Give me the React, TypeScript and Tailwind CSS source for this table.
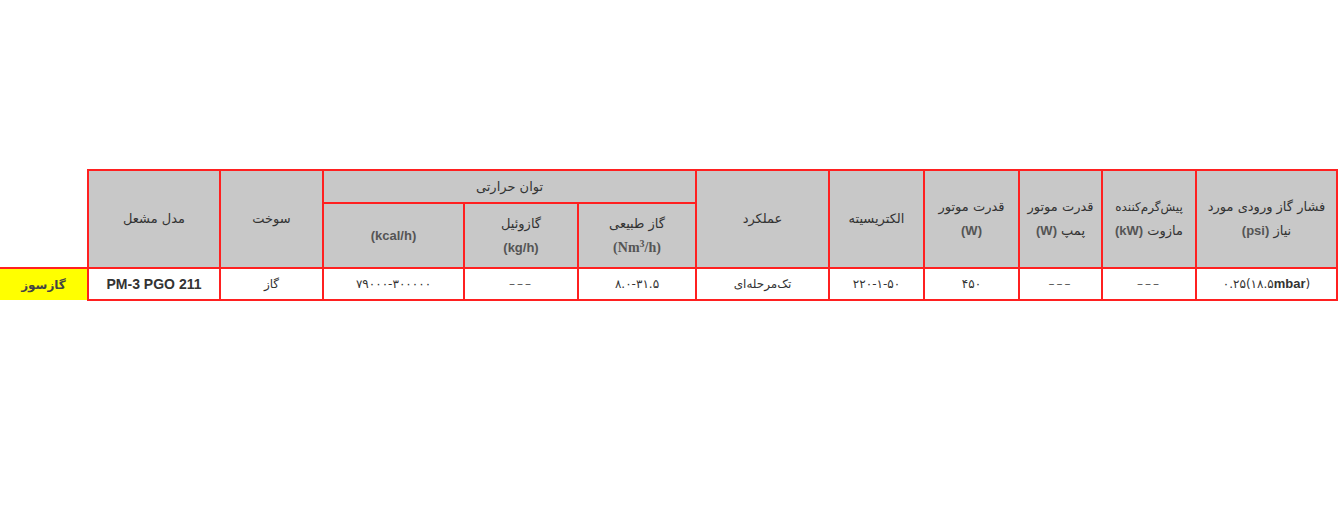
import React from "react";

const th = "border-2 border-[#ff2020] bg-[#c8c8c8] text-[#333] text-[13px] font-normal text-center align-middle leading-[24px] p-0";
const td = "border-2 border-[#ff2020] bg-white text-[#333] text-[12px] text-center align-middle p-0 h-[32px]";
const unit = "font-bold text-[#555] font-['Liberation_Sans',sans-serif]";
const dash = <span className="tracking-[2px] text-[#555]">–––</span>;

export default function App() {
  return (
    <div className="w-[1341px] h-[523px] bg-white font-['DejaVu_Sans',sans-serif] pt-[169px]">
      <table dir="rtl" className="table-fixed border-collapse w-[1337px]">
        <colgroup>
          <col className="w-[141px]" />
          <col className="w-[94px]" />
          <col className="w-[83px]" />
          <col className="w-[95px]" />
          <col className="w-[95px]" />
          <col className="w-[133px]" />
          <col className="w-[118px]" />
          <col className="w-[114px]" />
          <col className="w-[141px]" />
          <col className="w-[103px]" />
          <col className="w-[132px]" />
          <col className="w-[88px]" />
        </colgroup>
        <thead>
          <tr className="h-[33px]">
            <th rowSpan={2} className={th}>
              <div>فشار گاز ورودی مورد</div>
              <div>نیاز <span className={unit}>(psi)</span></div>
            </th>
            <th rowSpan={2} className={th}>
              <div className="text-[12px]">پیش‌گرم‌کننده</div>
              <div>مازوت <span className={unit}>(kW)</span></div>
            </th>
            <th rowSpan={2} className={th}>
              <div>قدرت موتور</div>
              <div>پمپ <span className={unit}>(W)</span></div>
            </th>
            <th rowSpan={2} className={th}>
              <div>قدرت موتور</div>
              <div className={unit}>(W)</div>
            </th>
            <th rowSpan={2} className={th}>الکتریسیته</th>
            <th rowSpan={2} className={th}>عملکرد</th>
            <th colSpan={3} className={th}>توان حرارتی</th>
            <th rowSpan={2} className={th}>سوخت</th>
            <th rowSpan={2} className={th}>مدل مشعل</th>
            <th rowSpan={2} className="p-0"></th>
          </tr>
          <tr className="h-[65px]">
            <th className={th}>
              <div>گاز طبیعی</div>
              <div className="font-bold text-[#555] font-['Liberation_Serif',serif] text-[14px]" dir="ltr">
                (Nm<sup className="text-[10px]">3</sup>/h)
              </div>
            </th>
            <th className={th}>
              <div>گازوئیل</div>
              <div className={unit} dir="ltr">(kg/h)</div>
            </th>
            <th className={th}>
              <div className={unit} dir="ltr">(kcal/h)</div>
            </th>
          </tr>
        </thead>
        <tbody>
          <tr>
            <td className={td}>
              <span dir="ltr">۰.۲۵(۱۸.۵<span className="font-bold text-[13px] font-['Liberation_Sans',sans-serif]">mbar</span>)</span>
            </td>
            <td className={td}>{dash}</td>
            <td className={td}>{dash}</td>
            <td className={td}>۴۵۰</td>
            <td className={td}><span dir="ltr">۲۲۰-۱-۵۰</span></td>
            <td className={td}>تک‌مرحله‌ای</td>
            <td className={td}><span dir="ltr">۸.۰-۳۱.۵</span></td>
            <td className={td}>{dash}</td>
            <td className={td}><span dir="ltr">۷۹۰۰۰-۳۰۰۰۰۰</span></td>
            <td className={td}>گاز</td>
            <td className={td + " font-bold text-[14px] font-['Liberation_Sans',sans-serif]"}>
              <span dir="ltr">PM-3 PGO 211</span>
            </td>
            <td className="border-t-2 border-[#ff2020] bg-[#ffff00] text-[#444] text-[12px] font-bold text-center align-middle p-0 h-[32px]">
              گازسوز
            </td>
          </tr>
        </tbody>
      </table>
    </div>
  );
}
